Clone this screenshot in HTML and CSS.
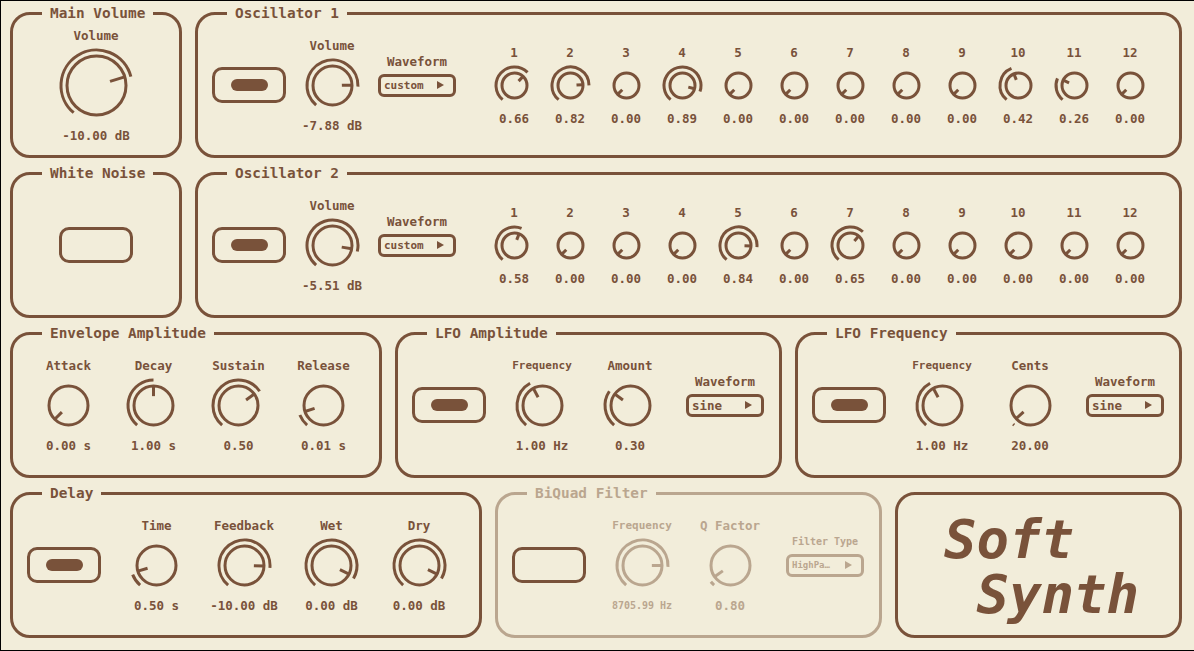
FILE: index.html
```html
<!DOCTYPE html>
<html lang="en">
<head>
    <meta charset="UTF-8">
    <meta name="viewport" content="width=device-width, initial-scale=1.0">
    <title>Soft Synth</title>
    <link rel="stylesheet" href="styles.css">
</head>
<body>
    <div class="synth">

        <div class="row row-osc">
            <section class="panel center">
                <h2 class="legend">Main Volume</h2>
                <div class="knob lg" data-size="lg" data-value="0.77">
                    <span class="knob-label">Volume</span>
                    <svg class="dial"></svg>
                    <span class="knob-value">-10.00 dB</span>
                </div>
            </section>

            <section class="panel with-toggle osc">
                <h2 class="legend">Oscillator 1</h2>
                <button class="toggle"><span class="pill"></span></button>
                <div class="knob" data-value="0.83">
                    <span class="knob-label">Volume</span>
                    <svg class="dial"></svg>
                    <span class="knob-value">-7.88 dB</span>
                </div>
                <div class="select-group">
                    <span class="knob-label">Waveform</span>
                    <div class="select"><span class="small-11">custom</span><i class="arrow"></i></div>
                </div>
                <div class="harmonics">
                    <div class="knob sm" data-size="sm" data-value="0.66"><span class="knob-label">1</span><svg class="dial"></svg><span class="knob-value">0.66</span></div>
                    <div class="knob sm" data-size="sm" data-value="0.82"><span class="knob-label">2</span><svg class="dial"></svg><span class="knob-value">0.82</span></div>
                    <div class="knob sm" data-size="sm" data-value="0"><span class="knob-label">3</span><svg class="dial"></svg><span class="knob-value">0.00</span></div>
                    <div class="knob sm" data-size="sm" data-value="0.89"><span class="knob-label">4</span><svg class="dial"></svg><span class="knob-value">0.89</span></div>
                    <div class="knob sm" data-size="sm" data-value="0"><span class="knob-label">5</span><svg class="dial"></svg><span class="knob-value">0.00</span></div>
                    <div class="knob sm" data-size="sm" data-value="0"><span class="knob-label">6</span><svg class="dial"></svg><span class="knob-value">0.00</span></div>
                    <div class="knob sm" data-size="sm" data-value="0"><span class="knob-label">7</span><svg class="dial"></svg><span class="knob-value">0.00</span></div>
                    <div class="knob sm" data-size="sm" data-value="0"><span class="knob-label">8</span><svg class="dial"></svg><span class="knob-value">0.00</span></div>
                    <div class="knob sm" data-size="sm" data-value="0"><span class="knob-label">9</span><svg class="dial"></svg><span class="knob-value">0.00</span></div>
                    <div class="knob sm" data-size="sm" data-value="0.42"><span class="knob-label">10</span><svg class="dial"></svg><span class="knob-value">0.42</span></div>
                    <div class="knob sm" data-size="sm" data-value="0.26"><span class="knob-label">11</span><svg class="dial"></svg><span class="knob-value">0.26</span></div>
                    <div class="knob sm" data-size="sm" data-value="0"><span class="knob-label">12</span><svg class="dial"></svg><span class="knob-value">0.00</span></div>
                </div>
            </section>
        </div>

        <div class="row row-osc">
            <section class="panel center">
                <h2 class="legend">White Noise</h2>
                <button class="toggle"></button>
            </section>

            <section class="panel with-toggle osc">
                <h2 class="legend">Oscillator 2</h2>
                <button class="toggle"><span class="pill"></span></button>
                <div class="knob" data-value="0.87">
                    <span class="knob-label">Volume</span>
                    <svg class="dial"></svg>
                    <span class="knob-value">-5.51 dB</span>
                </div>
                <div class="select-group">
                    <span class="knob-label">Waveform</span>
                    <div class="select"><span class="small-11">custom</span><i class="arrow"></i></div>
                </div>
                <div class="harmonics">
                    <div class="knob sm" data-size="sm" data-value="0.58"><span class="knob-label">1</span><svg class="dial"></svg><span class="knob-value">0.58</span></div>
                    <div class="knob sm" data-size="sm" data-value="0"><span class="knob-label">2</span><svg class="dial"></svg><span class="knob-value">0.00</span></div>
                    <div class="knob sm" data-size="sm" data-value="0"><span class="knob-label">3</span><svg class="dial"></svg><span class="knob-value">0.00</span></div>
                    <div class="knob sm" data-size="sm" data-value="0"><span class="knob-label">4</span><svg class="dial"></svg><span class="knob-value">0.00</span></div>
                    <div class="knob sm" data-size="sm" data-value="0.84"><span class="knob-label">5</span><svg class="dial"></svg><span class="knob-value">0.84</span></div>
                    <div class="knob sm" data-size="sm" data-value="0"><span class="knob-label">6</span><svg class="dial"></svg><span class="knob-value">0.00</span></div>
                    <div class="knob sm" data-size="sm" data-value="0.65"><span class="knob-label">7</span><svg class="dial"></svg><span class="knob-value">0.65</span></div>
                    <div class="knob sm" data-size="sm" data-value="0"><span class="knob-label">8</span><svg class="dial"></svg><span class="knob-value">0.00</span></div>
                    <div class="knob sm" data-size="sm" data-value="0"><span class="knob-label">9</span><svg class="dial"></svg><span class="knob-value">0.00</span></div>
                    <div class="knob sm" data-size="sm" data-value="0"><span class="knob-label">10</span><svg class="dial"></svg><span class="knob-value">0.00</span></div>
                    <div class="knob sm" data-size="sm" data-value="0"><span class="knob-label">11</span><svg class="dial"></svg><span class="knob-value">0.00</span></div>
                    <div class="knob sm" data-size="sm" data-value="0"><span class="knob-label">12</span><svg class="dial"></svg><span class="knob-value">0.00</span></div>
                </div>
            </section>
        </div>

        <div class="row row-mod">
            <section class="panel center envelope">
                <h2 class="legend">Envelope Amplitude</h2>
                <div class="knob" data-value="0">
                    <span class="knob-label">Attack</span><svg class="dial"></svg><span class="knob-value">0.00 s</span>
                </div>
                <div class="knob" data-value="0.5">
                    <span class="knob-label">Decay</span><svg class="dial"></svg><span class="knob-value">1.00 s</span>
                </div>
                <div class="knob" data-value="0.7">
                    <span class="knob-label">Sustain</span><svg class="dial"></svg><span class="knob-value">0.50</span>
                </div>
                <div class="knob" data-value="0.1">
                    <span class="knob-label">Release</span><svg class="dial"></svg><span class="knob-value">0.01 s</span>
                </div>
            </section>

            <section class="panel with-toggle lfo">
                <h2 class="legend">LFO Amplitude</h2>
                <button class="toggle"><span class="pill"></span></button>
                <div class="knob" data-value="0.396">
                    <span class="knob-label small-11">Frequency</span><svg class="dial"></svg><span class="knob-value">1.00 Hz</span>
                </div>
                <div class="knob" data-value="0.3">
                    <span class="knob-label">Amount</span><svg class="dial"></svg><span class="knob-value">0.30</span>
                </div>
                <div class="select-group">
                    <span class="knob-label">Waveform</span>
                    <div class="select"><span>sine</span><i class="arrow"></i></div>
                </div>
            </section>

            <section class="panel with-toggle lfo">
                <h2 class="legend">LFO Frequency</h2>
                <button class="toggle"><span class="pill"></span></button>
                <div class="knob" data-value="0.396">
                    <span class="knob-label small-11">Frequency</span><svg class="dial"></svg><span class="knob-value">1.00 Hz</span>
                </div>
                <div class="knob" data-value="0.01">
                    <span class="knob-label">Cents</span><svg class="dial"></svg><span class="knob-value">20.00</span>
                </div>
                <div class="select-group">
                    <span class="knob-label">Waveform</span>
                    <div class="select"><span>sine</span><i class="arrow"></i></div>
                </div>
            </section>
        </div>

        <div class="row row-fx">
            <section class="panel with-toggle delay">
                <h2 class="legend">Delay</h2>
                <button class="toggle"><span class="pill"></span></button>
                <div class="knob" data-value="0.104">
                    <span class="knob-label">Time</span><svg class="dial"></svg><span class="knob-value">0.50 s</span>
                </div>
                <div class="knob" data-value="0.84">
                    <span class="knob-label">Feedback</span><svg class="dial"></svg><span class="knob-value">-10.00 dB</span>
                </div>
                <div class="knob" data-value="0.93">
                    <span class="knob-label">Wet</span><svg class="dial"></svg><span class="knob-value">0.00 dB</span>
                </div>
                <div class="knob" data-value="0.93">
                    <span class="knob-label">Dry</span><svg class="dial"></svg><span class="knob-value">0.00 dB</span>
                </div>
            </section>

            <section class="panel with-toggle lfo disabled">
                <h2 class="legend">BiQuad Filter</h2>
                <button class="toggle"></button>
                <div class="knob" data-value="0.833">
                    <span class="knob-label small-11">Frequency</span><svg class="dial"></svg><span class="knob-value small-10">8705.99 Hz</span>
                </div>
                <div class="knob" data-value="0.037">
                    <span class="knob-label">Q Factor</span><svg class="dial"></svg><span class="knob-value">0.80</span>
                </div>
                <div class="select-group">
                    <span class="knob-label small-10">Filter Type</span>
                    <div class="select"><span class="small-9">HighPa…</span><i class="arrow"></i></div>
                </div>
            </section>

            <section class="panel center">
                <div class="logo">
                    <span>Soft</span>
                    <span class="indent">Synth</span>
                </div>
            </section>
        </div>

    </div>

    <script>
        // draw every dial: ring, value arc and pointer
        var radii = { lg: 29.5, md: 19.5, sm: 12.5 };

        function point(c, rad, deg) {
            var a = deg * Math.PI / 180;
            return [c + rad * Math.sin(a), c - rad * Math.cos(a)];
        }

        document.querySelectorAll('.knob').forEach(function (knob) {
            var r = radii[knob.dataset.size || 'md'];
            var value = parseFloat(knob.dataset.value);
            var size = 2 * r + 20;
            var c = size / 2;
            var svg = knob.querySelector('.dial');

            svg.setAttribute('width', size);
            svg.setAttribute('height', size);
            svg.setAttribute('viewBox', '0 0 ' + size + ' ' + size);

            var html = '<circle cx="' + c + '" cy="' + c + '" r="' + r + '" />';

            if (value > 0) {
                var start = -140;
                var end = -140 + 280 * value;
                var p0 = point(c, r + 6, start);
                var p1 = point(c, r + 6, end);
                var large = end - start > 180 ? 1 : 0;
                html += '<path d="M' + p0[0].toFixed(2) + ' ' + p0[1].toFixed(2) +
                    ' A' + (r + 6) + ' ' + (r + 6) + ' 0 ' + large + ' 1 ' +
                    p1[0].toFixed(2) + ' ' + p1[1].toFixed(2) + '" />';
            }

            var angle = -135 + 270 * value;
            var a = point(c, r * 0.48, angle);
            var b = point(c, r, angle);
            html += '<line x1="' + a[0].toFixed(2) + '" y1="' + a[1].toFixed(2) +
                '" x2="' + b[0].toFixed(2) + '" y2="' + b[1].toFixed(2) + '" />';

            svg.innerHTML = html;
        });
    </script>
</body>
</html>
```

FILE: styles.css
```css
* {
    box-sizing: border-box;
}

body {
    margin: 0;
    background-color: #f2edda;
    color: #79523a;
    font-family: "DejaVu Sans Mono", monospace;
    font-weight: bold;
}

.synth {
    width: 1194px;
    height: 651px;
    border: 1px solid #000;
    border-right: none;
    padding: 11px 12px 12px 9px;
    display: flex;
    flex-direction: column;
    gap: 14px;
}

.row {
    display: grid;
    gap: 13px;
    height: 146px;
}

.row-osc {
    grid-template-columns: 172px 1fr;
}

.row-mod {
    grid-template-columns: 372px 387px 387px;
}

.row-fx {
    grid-template-columns: 472px 387px 287px;
}

.panel {
    --ink: #79523a;
    position: relative;
    border: 3px solid var(--ink);
    border-radius: 20px;
    color: var(--ink);
    display: flex;
    align-items: center;
}

.panel.disabled {
    --ink: #baa68f;
}

.center {
    justify-content: center;
}

.with-toggle {
    padding-left: 14px;
}

.legend {
    position: absolute;
    top: -11px;
    left: 29px;
    margin: 0;
    padding: 0 8px;
    background-color: #f2edda;
    font-size: 14.4px;
    line-height: 18px;
    white-space: nowrap;
}

.osc {
    gap: 14px;
}

.envelope {
    gap: 21px;
}

.lfo {
    gap: 24px;
}

.delay {
    gap: 23.5px;
}

.toggle {
    flex-shrink: 0;
    width: 74px;
    height: 36px;
    padding: 0;
    border: 3px solid #79523a;
    border-radius: 10px;
    background: none;
    display: flex;
    align-items: center;
    justify-content: center;
}

.pill {
    width: 37px;
    height: 12px;
    border-radius: 6px;
    background-color: #79523a;
}

.knob {
    flex-shrink: 0;
    width: 64px;
    display: flex;
    flex-direction: column;
    align-items: center;
    gap: 3px;
}

.knob.sm {
    width: 45px;
}

.knob.lg {
    width: 80px;
}

.knob-label,
.knob-value {
    font-size: 12.5px;
    line-height: 15px;
    white-space: nowrap;
}

.dial {
    display: block;
    fill: none;
    stroke: var(--ink);
    stroke-width: 3;
}

.harmonics {
    display: flex;
    gap: 11px;
    margin-left: 21.5px;
}

.select-group {
    flex-shrink: 0;
    display: flex;
    flex-direction: column;
    align-items: center;
    gap: 5px;
    padding-bottom: 20px;
}

.select {
    width: 78px;
    height: 23px;
    border: 3px solid var(--ink);
    border-radius: 6px;
    padding: 0 9px 0 3px;
    display: flex;
    align-items: center;
    justify-content: space-between;
    font-size: 12.5px;
    white-space: nowrap;
}

.arrow {
    width: 0;
    height: 0;
    border-left: 7px solid var(--ink);
    border-top: 4px solid transparent;
    border-bottom: 4px solid transparent;
}

.small-11 {
    font-size: 11px;
}

.small-10 {
    font-size: 10px;
}

.small-9 {
    font-size: 9px;
}

.logo {
    font-size: 54px;
    line-height: 55px;
    font-style: italic;
    padding-top: 3px;
    margin-left: 6px;
}

.logo span {
    display: block;
}

.logo .indent {
    padding-left: 1ch;
}
```
